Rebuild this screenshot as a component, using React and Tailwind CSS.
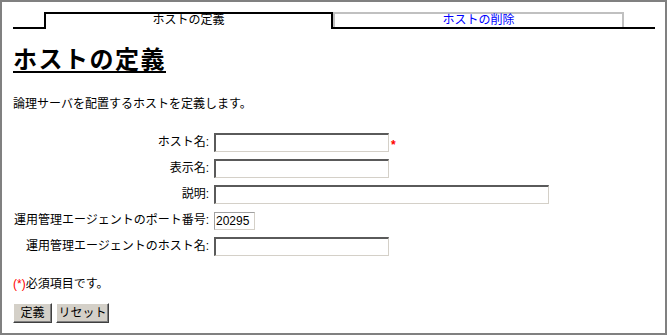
import React from "react";

const inputCls =
  "h-[19px] bg-white border-t-2 border-l-2 border-r border-b border-t-[#5a5a5a] border-l-[#5a5a5a] border-r-[#d4d0c8] border-b-[#d4d0c8] box-border outline-none px-[1px] text-[12px]";

function Row({ label, children }) {
  return (
    <div className="flex items-center h-[19px] mb-[7px]">
      <div className="w-[196px] text-right leading-[15px] whitespace-nowrap">{label}</div>
      <div className="ml-[5px] flex items-center">{children}</div>
    </div>
  );
}

const btnCls =
  "h-[20px] bg-[#d4d0c8] border border-t-white border-l-white border-b-[#404040] border-r-[#404040] shadow-[inset_-1px_-1px_0_#808080] text-[12px] leading-[14px] px-0 whitespace-nowrap text-black";

export default function App() {
  return (
    <div className="w-[667px] h-[335px] box-border border-2 border-[#808080] bg-white pl-[11px] pt-[10px] font-['Liberation_Sans','Noto_Sans_CJK_JP',sans-serif] text-[12px] text-black">
      <div className="flex h-[17px]">
        <div className="w-[31px] h-full border-b-2 border-black" />
        <div className="w-[289px] h-full border-t-2 border-x-2 border-black text-center leading-[13px]">
          ホストの定義
        </div>
        <div className="w-[291px] h-full flex flex-col">
          <div className="flex-1 border-t-2 border-x-2 border-[#c0c0c0] text-center leading-[13px] text-[#0000ff]">
            ホストの削除
          </div>
          <div className="h-[2px] bg-black" />
        </div>
        <div className="w-[31px] h-full border-b-2 border-black" />
      </div>

      <h1 className="mt-[17px] text-[24px] leading-[28px] font-bold tracking-[1.5px] underline decoration-2 underline-offset-[3px] w-fit">
        ホストの定義
      </h1>

      <p className="mt-[23px] leading-[15px]">論理サーバを配置するホストを定義します。</p>

      <div className="mt-[21px]">
        <Row label="ホスト名:">
          <input className={`${inputCls} w-[175px]`} />
          <span className="ml-[2px] text-[#ff0000] font-bold leading-[12px] mt-[4px]">*</span>
        </Row>
        <Row label="表示名:">
          <input className={`${inputCls} w-[175px]`} />
        </Row>
        <Row label="説明:">
          <input className={`${inputCls} w-[335px]`} />
        </Row>
        <Row label="運用管理エージェントのポート番号:">
          <input
            className="h-[18px] w-[41px] bg-white border border-[#a0a0a0] border-b-[#d4d0c8] border-r-[#d4d0c8] px-[1px] text-[12px] outline-none"
            defaultValue="20295"
          />
        </Row>
        <Row label="運用管理エージェントのホスト名:">
          <input className={`${inputCls} w-[175px]`} />
        </Row>
      </div>

      <p className="mt-[21px] leading-[15px]">
        <span className="text-[#ff0000]">(*)</span>必須項目です。
      </p>

      <div className="mt-[11px] flex gap-[4px]">
        <button className={`${btnCls} w-[39px]`}>定義</button>
        <button className={`${btnCls} w-[53px]`}>リセット</button>
      </div>
    </div>
  );
}
